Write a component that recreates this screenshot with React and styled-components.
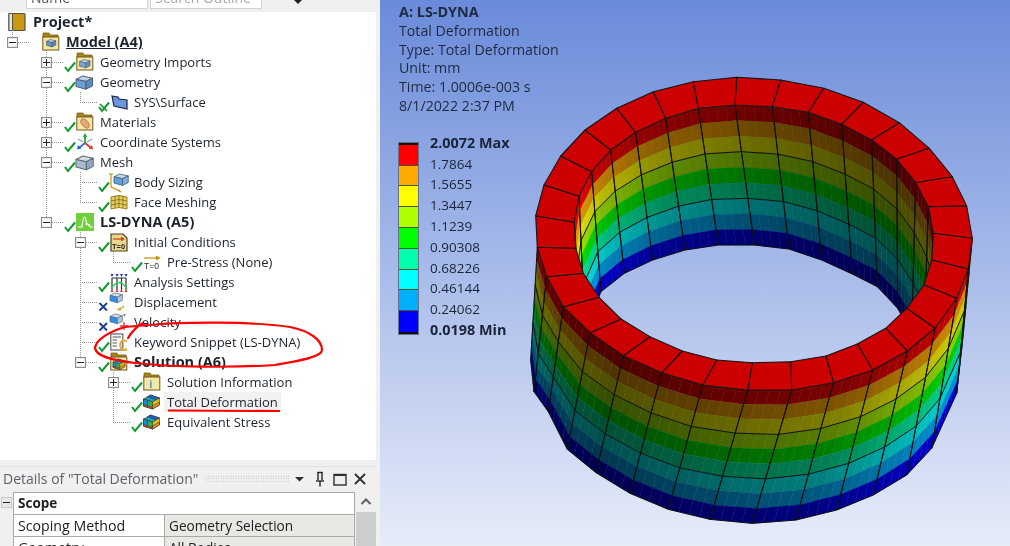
import React from 'react';
import styled, { createGlobalStyle } from 'styled-components';

const Global = createGlobalStyle`
  html, body { margin: 0; padding: 0; background: #f0f0f0; overflow: hidden; }
  #root { width: 1010px; height: 546px; }
`;
const FONT = `"Open Sans", "Noto Sans", "Liberation Sans", sans-serif`;

const Page = styled.div`
  width: 1010px; height: 546px; display: flex; overflow: hidden; background: #f1f1f1;
  font-family: ${FONT}; filter: blur(0.35px);
`;
const LeftPane = styled.div`
  width: 376px; flex: none; display: flex; flex-direction: column; background: #fff;
`;
const TopBar = styled.div`
  height: 12px; flex: none; background: #f0f0f0; display: flex; align-items: flex-end; padding: 0 0 3px 26px; box-sizing: border-box; gap: 2px; overflow: hidden;
`;
const TopField = styled.div`
  width: ${p => p.$w}px; height: 20px; flex: none; background: #fff; border: 1px solid #d4d4d4; box-sizing: border-box;
  font-size: 14px; color: ${p => p.$c}; padding-left: 4px; line-height: 15px; overflow: hidden; white-space: nowrap;
`;
const TopCaret = styled.div`
  margin-left: 29px; margin-bottom: 5px; width: 0; height: 0; flex: none; border-left: 5px solid transparent; border-right: 5px solid transparent; border-top: 5px solid #222;
`;
const Tree = styled.div`
  height: 448px; flex: none; position: relative; display: flex; flex-direction: column; background: #fff;
`;
const TreeLines = styled.svg`
  position: absolute; left: 0; top: 0; pointer-events: none;
`;
const Row = styled.div`
  height: 20px; flex: none; display: flex; align-items: center; padding-left: ${p => p.$left}px; position: relative;
`;
const ExpanderBox = styled.div`
  width: 11px; height: 11px; box-sizing: border-box; border: 1px solid #8e8e8e; background: #fff; flex: none; display: flex; align-items: center; justify-content: center;
  box-shadow: inset 0 0 0 1px #e8e8e8; position: relative;
  &::before { content: ''; width: 7px; height: 1px; background: #222; position: absolute; }
  &::after { content: ''; display: ${p => p.$plus ? 'block' : 'none'}; width: 1px; height: 7px; background: #222; position: absolute; }
`;
const Stub = styled.div`
  width: 11px; flex: none; height: 1px; background: repeating-linear-gradient(90deg, #999 0 1px, transparent 1px 2px) right / 6px 1px no-repeat;
`;
const Connector = styled.div`
  width: 12.5px; flex: none; height: 1px; background: repeating-linear-gradient(90deg, #999 0 1px, transparent 1px 2px);
`;
const MarkSlot = styled.svg`
  width: 12px; height: 20px; flex: none; overflow: visible;
`;
const IconSlot = styled.svg`
  width: 18px; height: 20px; flex: none; overflow: visible;
`;
const Label = styled.span`
  font-size: ${p => p.$bold ? '14.5px' : '13px'}; line-height: 20px; white-space: nowrap; color: #1b2230;
  font-weight: ${p => p.$bold ? 700 : 400};
  text-decoration: ${p => p.$under ? 'underline' : 'none'};
  background: ${p => p.$hl ? '#f1f1f1' : 'transparent'};
  padding: ${p => p.$hl ? '0 3px' : '0'};
  margin-left: ${p => p.$hl ? '3px' : p.$flush ? '0' : '6px'};
`;
const ProjectRow = styled.div`
  height: 20px; flex: none; display: flex; align-items: center; padding-left: 8px; gap: 7px;
`;
const ProjectIcon = styled.svg`
  width: 18px; height: 20px; flex: none;
`;
const Ink = styled.svg`
  position: absolute; left: 0; top: 0; pointer-events: none; z-index: 3;
`;
const DetailsGap = styled.div`
  height: 6px; flex: none; background: #f0f0f0;
`;
const DetailsHead = styled.div`
  height: 24px; flex: none; background: #f0f0f0; display: flex; align-items: center; padding-left: 3px; color: #5c6068; font-size: 14px; border-top: 1px solid #dfe3e8; box-sizing: border-box; white-space: nowrap;
`;
const HeadTitle = styled.span`
  width: 195px; flex: none;
`;
const Grip = styled.div`
  width: 85px; height: 7px; margin-left: 7px; flex: none;
  background-image: radial-gradient(#b5b5b5 0.6px, transparent 0.7px); background-size: 2.5px 2.5px;
`;
const HeadIcons = styled.div`
  display: flex; align-items: center;
`;
const HeadIcon = styled.svg`
  width: 20px; height: 16px; flex: none; color: #303030;
`;
const DetailsBody = styled.div`
  flex: 1; display: flex; background: #f0f0f0; min-height: 0; overflow: hidden; padding-top: 2px;
`;
const Gutter = styled.div`
  width: 13px; flex: none; padding-top: 5px; box-sizing: border-box; display: flex; justify-content: center; align-items: flex-start;
`;
const SmallMinus = styled.div`
  width: 9px; height: 9px; background: #e8e8e8; border: 1px solid #c8c8c8; position: relative;
  &::before { content: ''; position: absolute; left: 1px; right: 1px; top: 4px; height: 1px; background: #222; }
`;
const Grid = styled.div`
  width: 342px; flex: none; display: flex; flex-direction: column; border: 1px solid #a9a9a9; border-bottom: 0; box-sizing: border-box; background: #fff; color: #202020;
`;
const SectionRow = styled.div`
  height: 22px; flex: none; font-weight: 700; font-size: 13.5px; line-height: 21px; padding-left: 4px; border-bottom: 1px solid #a9a9a9; box-sizing: border-box;
`;
const DataRow = styled.div`
  height: 22px; flex: none; display: grid; grid-template-columns: 151px 1fr; border-bottom: 1px solid #a9a9a9; box-sizing: border-box; line-height: 21px; white-space: nowrap;
`;
const DataKey = styled.div`
  padding-left: 4px; border-right: 1px solid #a9a9a9; font-size: 14.2px;
`;
const DataVal = styled.div`
  padding-left: 4px; background: #e9e8e4; font-size: 13.6px;
`;
const ScrollBar = styled.div`
  flex: 1; display: flex; flex-direction: column; align-items: center; margin-left: 1px;
`;
const ScrollUp = styled.svg`
  width: 20px; height: 20px; flex: none; color: #606060;
`;
const ScrollThumb = styled.div`
  width: 100%; flex: 1; background: #cdcdcd;
`;
const Split = styled.div`
  width: 4px; flex: none; background: #f0f0f0;
`;
const Viewport = styled.div`
  flex: 1; position: relative; padding: 3px 0 0 19px; background: linear-gradient(180deg, #6a8bda 0%, #e7ecf9 100%); color: #1e2a40; overflow: hidden;
`;
const Ring = styled.svg`
  position: absolute; left: 0; top: 0; filter: blur(0.2px);
`;
const InfoLine = styled.div`
  font-size: ${p => p.$bold ? '14.4px' : '14.2px'}; line-height: 18.8px; height: 18.8px; white-space: nowrap; font-weight: ${p => p.$bold ? 700 : 400}; position: relative;
`;
const Legend = styled.div`
  display: flex; align-items: flex-start; margin-top: 27px; position: relative;
`;
const Scale = styled.div`
  width: 19px; display: flex; flex-direction: column; flex: none; border-top: 2px solid #111; border-bottom: 2px solid #111; outline: 1px solid #66708a;
`;
const Swatch = styled.div`
  height: 20.8px; background: ${p => p.$c}; box-sizing: border-box; border-bottom: ${p => p.$last ? 0 : '1px solid #4a5030'};
`;
const Values = styled.div`
  margin-left: 12px; margin-top: -10px; display: flex; flex-direction: column;
`;
const Value = styled.div`
  height: 20.8px; line-height: 20.8px; font-size: ${p => p.$bold ? '14.4px' : '13.5px'}; white-space: nowrap; font-weight: ${p => p.$bold ? 700 : 400}; color: #1a2438;
`;

/* ---------- icons ---------- */
const Check = () => <path d="M1 15 L4 19 L11 10.5" fill="none" stroke="#0f9a2c" strokeWidth="2" />;
const Mark = ({ kind }) => (
  <MarkSlot viewBox="0 0 12 20">
    {kind === 'check' && <Check />}
    {kind === 'xcheck' && <g><Check /><path d="M2 12 L9 19" stroke="#0f9a2c" strokeWidth="1.7" /></g>}
    {kind === 'x' && <path d="M1.5 11 L9 18.5 M9 11 L1.5 18.5" stroke="#1c3a94" strokeWidth="1.8" />}
  </MarkSlot>
);
const Cube = ({ x = 3, y = 3, s = 1, top = '#c6d5e6', side = '#8fa6bf', front = '#a8bdd4', stroke = '#5a6b80' }) => (
  <g transform={`translate(${x} ${y}) scale(${s})`} stroke={stroke} strokeWidth="0.9" strokeLinejoin="round">
    <path d="M0 3 L6 0 L15 2 L9 5 Z" fill={top} />
    <path d="M0 3 L9 5 L9 12 L0 9.5 Z" fill={front} />
    <path d="M9 5 L15 2 L15 9 L9 12 Z" fill={side} />
  </g>
);
const Folder = ({ children }) => (
  <g>
    <path d="M1 3 L1 1 L7 1 L8 3 L16 3 L16 6 L1 6 Z" fill="#a9821c" stroke="#7a5f14" strokeWidth="0.8" />
    <rect x="0.8" y="5" width="16" height="13" fill="#f6e7a4" stroke="#6d5a1e" strokeWidth="1" />
    {children}
  </g>
);
const Rainbow = ({ x = 0, y = 0, s = 1 }) => (
  <g transform={`translate(${x} ${y}) scale(${s})`} stroke="#333" strokeWidth="0.6" strokeLinejoin="round">
    <path d="M0 4 L7 0 L16 3 L9 7 Z" fill="#18a8b8" />
    <path d="M7 0 L16 3 L13 4.8 L4 2 Z" fill="#2060d0" />
    <path d="M0 4 L9 7 L9 14 L0 11 Z" fill="#28b848" />
    <path d="M0 4 L4 5.4 L4 12.4 L0 11 Z" fill="#1e88e0" />
    <path d="M0 9.5 L9 12.4 L9 14 L0 11 Z" fill="#e85020" />
    <path d="M9 7 L16 3 L16 10 L9 14 Z" fill="#e0c020" />
    <path d="M9 11 L16 7 L16 10 L9 14 Z" fill="#e89018" />
  </g>
);
const Icon = ({ kind }) => {
  let body = null;
  switch (kind) {
    case 'modelFolder': body = <Folder><Cube x={4.5} y={7.5} s={0.62} top="#b8cfe6" front="#6f97c5" side="#5d86b5" stroke="#33506f" /></Folder>; break;
    case 'geomImport': body = <Folder><Cube x={3.5} y={7.5} s={0.7} top="#b8cfe6" front="#7fa3cc" side="#6b8fb8" stroke="#445f7c" /></Folder>; break;
    case 'geometry': body = <Cube x={0} y={4} s={1.1} top="#bcd0e6" front="#6f9ed6" side="#5d8ac2" stroke="#4a5f78" />; break;
    case 'surface': body = <path d="M2 4 L8 5 L9 7 L17 8 L17 17 L4 14 Z" fill="#6d96e0" stroke="#1b2440" strokeWidth="1.2" />; break;
    case 'materials': body = <Folder><ellipse cx="9" cy="11.5" rx="3.2" ry="5.5" transform="rotate(-40 9 11.5)" fill="#e8a878" stroke="#a87850" strokeWidth="0.8" /></Folder>; break;
    case 'csys': body = (
      <g strokeWidth="1.8" fill="none">
        <path d="M9 11 L9 3" stroke="#22a838" />
        <path d="M9 1 L6.8 5 L11.2 5 Z" fill="#22a838" stroke="none" />
        <path d="M9 11 L3 16" stroke="#3b6fd0" />
        <path d="M1 17.5 L2 13 L5.4 16.4 Z" fill="#2a5fc8" stroke="none" />
        <path d="M9 11 L15 16" stroke="#e03828" />
        <path d="M17 17.5 L16 13 L12.6 16.4 Z" fill="#e03828" stroke="none" />
        <path d="M2 7 L7 10 M16 7 L11 10" stroke="#8fa0b0" strokeWidth="1.2" />
      </g>
    ); break;
    case 'mesh': body = <Cube x={0} y={4} s={1.15} top="#d3dce6" front="#a9bcd0" side="#93a8bf" stroke="#5c6b7c" />; break;
    case 'sizing': body = (
      <g>
        <path d="M1 2 L1 15 L10 19" fill="none" stroke="#d9a830" strokeWidth="1.5" />
        <path d="M-1 2 L3 2 M8 18 L11 20" stroke="#b88a20" strokeWidth="1.2" />
        <Cube x={4} y={2} s={0.95} top="#c5d5e6" front="#5f9ee0" side="#7aaedc" stroke="#4c6178" />
      </g>
    ); break;
    case 'face': body = (
      <g stroke="#8d7416" strokeWidth="0.9" fill="#e6cf62">
        <path d="M1 5 Q9 2 17 5 L17 17 Q9 14 1 17 Z" />
        <path d="M1 9 Q9 6 17 9 M1 13 Q9 10 17 13 M5 3.8 L5 15.8 M9 3.2 L9 15.2 M13 3.8 L13 15.8" fill="none" />
      </g>
    ); break;
    case 'dyna': body = (
      <g>
        <rect x="0" y="1" width="18" height="18" fill="#6fcf3c" />
        <path d="M2 15 L6 15 Q7 5 8.5 5 Q10 5 10.5 13 Q11.5 10 12.5 13 Q13.5 11.5 14 15 L17 15" fill="none" stroke="#fff" strokeWidth="1.2" />
      </g>
    ); break;
    case 'init': body = (
      <g>
        <path d="M1 2 L13 2 L17 6 L17 19 L1 19 Z" fill="#e9d88c" stroke="#4a4020" strokeWidth="1.2" />
        <path d="M3 7 L13 7" stroke="#c94a1c" strokeWidth="1.3" />
        <path d="M11 4.5 L15 7 L11 9.5 Z" fill="#c94a1c" />
        <text x="2" y="17" fontSize="7.5" fontWeight="700" fill="#222" fontFamily="Liberation Sans">T=0</text>
      </g>
    ); break;
    case 't0': body = (
      <g>
        <path d="M1 6 L15 6" stroke="#c89818" strokeWidth="1.3" />
        <path d="M13 3.5 L18 6 L13 8.5 Z" fill="#c89818" />
        <text x="1" y="17" fontSize="8.5" fill="#303030" fontFamily="Liberation Sans">T=0</text>
      </g>
    ); break;
    case 'analysis': body = (
      <g fill="none">
        <path d="M2 6 L16 6 M2 6 L2 18 M7 6 L7 18 M11.5 6 L11.5 18 M16 6 L16 18" stroke="#303030" strokeWidth="1.2" />
        <path d="M1 17 Q9 4 17 17" stroke="#2ecc50" strokeWidth="1.3" />
        <path d="M0.5 2 L3.5 2 L2 5 Z M5.5 2 L8.5 2 L7 5 Z M10 2 L13 2 L11.5 5 Z M14.5 2 L17.5 2 L16 5 Z" fill="#2030d0" />
        <path d="M0.5 20 L3.5 20 L2 17 Z M5.5 20 L8.5 20 L7 17 Z M10 20 L13 20 L11.5 17 Z M14.5 20 L17.5 20 L16 17 Z" fill="#e03838" />
      </g>
    ); break;
    case 'disp': body = (
      <g>
        <Cube x={0} y={1} s={0.82} top="#d8e2ec" front="#2f8fe6" side="#b5c6d8" stroke="#5a6b80" />
        <path d="M9 18 L14 14" stroke="#d8a828" strokeWidth="1.4" />
        <path d="M6.5 18 L10.5 15 L11 18.5 Z" fill="#d8a828" />
      </g>
    ); break;
    case 'vel': body = (
      <g>
        <Cube x={0} y={2} s={0.82} top="#d8e2ec" front="#2f8fe6" side="#b5c6d8" stroke="#5a6b80" />
        <path d="M10 14 L18 14 M14 10 L14 18" stroke="#e03838" strokeWidth="1.3" />
        <path d="M13 2 L16 2 L14.5 5 Z" fill="#888" />
      </g>
    ); break;
    case 'keyword': body = (
      <g>
        <rect x="0.8" y="2" width="12" height="16" fill="#fff" stroke="#555" strokeWidth="1.1" />
        <path d="M2.5 5 L11 5 M2.5 8 L7 8 M2.5 11 L7 11 M2.5 14 L7 14" stroke="#555" strokeWidth="1" />
        <path d="M17 9.5 Q14 7.5 11.5 9.5 Q9 13 11.5 17 Q14 19 17 17" fill="none" stroke="#dcae3a" strokeWidth="2.2" />
      </g>
    ); break;
    case 'solution': body = <Folder><Rainbow x={3} y={7} s={0.75} /></Folder>; break;
    case 'info': body = <Folder><text x="6.5" y="16" fontSize="10" fontWeight="700" fill="#3a8ee0" fontFamily="Liberation Sans">i</text></Folder>; break;
    case 'result': body = <Rainbow x={0.5} y={3} />; break;
    default: break;
  }
  return <IconSlot viewBox="0 0 18 20">{body}</IconSlot>;
};

const TREE = [
  { l: 6.5, e: 'minus', m: '', i: 'modelFolder', t: 'Model (A4)', bold: true, under: true },
  { l: 40.5, e: 'plus', m: 'check', i: 'geomImport', t: 'Geometry Imports' },
  { l: 40.5, e: 'minus', m: 'check', i: 'geometry', t: 'Geometry' },
  { l: 74.5, m: 'xcheck', i: 'surface', t: 'SYS\\Surface' },
  { l: 40.5, e: 'plus', m: 'check', i: 'materials', t: 'Materials' },
  { l: 40.5, e: 'plus', m: 'check', i: 'csys', t: 'Coordinate Systems' },
  { l: 40.5, e: 'minus', m: 'check', i: 'mesh', t: 'Mesh' },
  { l: 74.5, m: 'check', i: 'sizing', t: 'Body Sizing' },
  { l: 74.5, m: 'check', i: 'face', t: 'Face Meshing' },
  { l: 40.5, e: 'minus', m: 'check', i: 'dyna', t: 'LS-DYNA (A5)', bold: true },
  { l: 74.5, e: 'minus', m: 'check', i: 'init', t: 'Initial Conditions' },
  { l: 107.5, m: 'check', i: 't0', t: 'Pre-Stress (None)' },
  { l: 74.5, m: 'check', i: 'analysis', t: 'Analysis Settings' },
  { l: 74.5, m: 'x', i: 'disp', t: 'Displacement' },
  { l: 74.5, m: 'x', i: 'vel', t: 'Velocity' },
  { l: 74.5, m: 'check', i: 'keyword', t: 'Keyword Snippet (LS-DYNA)' },
  { l: 74.5, e: 'minus', m: 'check', i: 'solution', t: 'Solution (A6)', bold: true },
  { l: 107.5, e: 'plus', m: 'check', i: 'info', t: 'Solution Information' },
  { l: 107.5, m: 'check', i: 'result', t: 'Total Deformation', hl: true },
  { l: 107.5, m: 'check', i: 'result', t: 'Equivalent Stress' },
];

/* ---------- ring model, traced from the picture ---------- */
const Z5 = ([x, y]) => [520 + x / 3, 70 + y / 3];
const Z6 = ([x, y]) => [520 + x / 3, 290 + y / 3];
const OUT = [
  [650, 22], [782, 30], [912, 55], [1030, 97], [1138, 158], [1228, 235], [1297, 320], [1340, 408], [1357, 505], [1345, 597], [1310, 685],
].map(Z5).concat([
  [1245, 115], [1162, 183], [1058, 240], [940, 278], [815, 300], [683, 300], [548, 285], [425, 248], [310, 197], [210, 128], [130, 50],
].map(Z6)).concat([
  [80, 620], [52, 532], [47, 437], [72, 345], [122, 258], [195, 180], [290, 115], [400, 65], [520, 35],
].map(Z5));
const INN = [
  [645, 105], [757, 110], [865, 127], [965, 163], [1055, 210], [1130, 268], [1187, 338], [1225, 410], [1240, 490], [1235, 570], [1212, 645],
].map(Z5).concat([
  [1160, 55], [1097, 115], [1012, 162], [918, 198], [812, 215], [697, 218], [590, 210], [487, 183], [390, 140], [303, 87], [237, 22],
].map(Z6)).concat([
  [190, 610], [167, 535], [163, 457], [177, 378], [215, 305], [272, 240], [347, 187], [437, 145], [535, 115],
].map(Z5));
const OUT_BOTTOM = {
  8: Z6([1328, 150]), 9: Z6([1310, 310]), 10: Z6([1235, 475]), 11: Z6([1160, 555]), 12: Z6([1060, 615]), 13: Z6([950, 660]),
  14: Z6([828, 690]), 15: Z6([697, 700]), 16: Z6([570, 688]), 17: Z6([445, 658]), 18: Z6([330, 610]), 19: Z6([228, 548]),
  20: Z6([142, 478]), 21: Z6([85, 365]), 22: Z6([42, 305]), 23: Z6([32, 210]),
};
const INN_BOTTOM = {
  24: Z5([190, 880]), 25: Z5([195, 780]), 26: Z5([243, 665]), 27: Z5([313, 610]), 28: Z5([398, 570]), 29: Z5([495, 540]), 30: Z5([595, 525]),
  0: Z5([703, 525]), 1: Z5([807, 537]), 2: Z5([905, 570]), 3: Z5([997, 612]), 4: Z5([1072, 650]), 5: Z5([1133, 715]),
  6: Z5([1175, 790]), 7: Z5([1210, 860]), 8: Z5([1235, 900]), 9: Z5([1235, 960]),
};
const BANDS = [
  [255, 0, 0], [255, 170, 0], [255, 255, 0], [176, 255, 0], [0, 255, 0], [0, 255, 170], [0, 255, 255], [0, 176, 255], [0, 0, 255],
];
const lerp = (a, b, t) => [a[0] + (b[0] - a[0]) * t, a[1] + (b[1] - a[1]) * t];
const pts = arr => arr.map(p => `${p[0].toFixed(1)},${p[1].toFixed(1)}`).join(' ');
const interp = (table, x) => {
  if (x <= table[0][0]) return table[0][1];
  for (let i = 1; i < table.length; i++) {
    if (x <= table[i][0]) {
      const t = (x - table[i - 1][0]) / (table[i][0] - table[i - 1][0]);
      return table[i - 1][1] + (table[i][1] - table[i - 1][1]) * t;
    }
  }
  return table[table.length - 1][1];
};
const OUT_LIGHT = [[530, 0.45], [560, 0.36], [620, 0.31], [750, 0.41], [850, 0.5], [890, 0.6], [920, 0.68], [960, 0.8]];
const INN_LIGHT = [[575, 0.9], [600, 0.72], [650, 0.55], [750, 0.42], [820, 0.36], [900, 0.3], [935, 0.34]];

const wall = (top, bottom, keys, light, prefix) => {
  const polys = [];
  const lines = [];
  keys.forEach(([a, b]) => {
    const ta = top[a], tb = top[b], ba = bottom[a], bb = bottom[b];
    const sub = 4;
    for (let s = 0; s < sub; s++) {
      const u0 = s / sub, u1 = (s + 1) / sub;
      const t0 = lerp(ta, tb, u0), t1 = lerp(ta, tb, u1), b0 = lerp(ba, bb, u0), b1 = lerp(ba, bb, u1);
      const k = interp(light, (t0[0] + t1[0]) / 2);
      BANDS.forEach((c, i) => {
        const v0 = i / 9, v1 = (i + 1) / 9;
        const col = `rgb(${c.map(n => Math.round(n * k)).join(',')})`;
        polys.push(
          <polygon key={`${prefix}${a}-${s}-${i}`} points={pts([lerp(t0, b0, v0), lerp(t1, b1, v0), lerp(t1, b1, v1), lerp(t0, b0, v1)])} fill={col} stroke={col} strokeWidth="0.4" />
        );
      });
    }
    [1 / 3, 2 / 3, 1].forEach((v, i) => {
      const p = lerp(ta, ba, v), q = lerp(tb, bb, v);
      lines.push(<line key={`${prefix}h${a}-${i}`} x1={p[0]} y1={p[1]} x2={q[0]} y2={q[1]} stroke="#101010" strokeWidth="1" />);
    });
    lines.push(<line key={`${prefix}v${a}`} x1={ta[0]} y1={ta[1]} x2={ba[0]} y2={ba[1]} stroke="#101010" strokeWidth="1" />);
    lines.push(<line key={`${prefix}w${a}`} x1={tb[0]} y1={tb[1]} x2={bb[0]} y2={bb[1]} stroke="#101010" strokeWidth="1" />);
  });
  return [...polys, ...lines];
};
const outKeys = [];
for (let i = 8; i < 23; i++) outKeys.push([i, i + 1]);
const innKeys = [[24, 25], [25, 26], [26, 27], [27, 28], [28, 29], [29, 30], [30, 0], [0, 1], [1, 2], [2, 3], [3, 4], [4, 5], [5, 6], [6, 7], [7, 8], [8, 9]];

const RingModel = () => (
  <Ring width="630" height="546" viewBox="380 0 630 546">
    <defs>
      <clipPath id="inner-hole"><polygon points={pts(INN)} /></clipPath>
    </defs>
    {wall(OUT, OUT_BOTTOM, outKeys, OUT_LIGHT, 'o')}
    <g clipPath="url(#inner-hole)">{wall(INN, INN_BOTTOM, innKeys, INN_LIGHT, 'i')}</g>
    {OUT.map((p, i) => {
      const n = (i + 1) % OUT.length;
      return <polygon key={i} points={pts([p, OUT[n], INN[n], INN[i]])} fill="#cc0000" stroke="#141414" strokeWidth="1.1" strokeLinejoin="round" />;
    })}
  </Ring>
);

const LEGEND = [
  ['#ff0000', '1.7864'], ['#ffaa00', '1.5655'], ['#ffff00', '1.3447'], ['#b0ff00', '1.1239'], ['#00ff00', '0.90308'],
  ['#00ffaa', '0.68226'], ['#00ffff', '0.46144'], ['#00b0ff', '0.24062'], ['#0000ff', ''],
];

export default function App() {
  return (
    <Page>
      <Global />
      <LeftPane>
        <TopBar>
          <TopField $w={122} $c="#555">Name</TopField>
          <TopField $w={112} $c="#aaa">Search Outline</TopField>
          <TopCaret />
        </TopBar>
        <Tree>
          <TreeLines width="376" height="448" viewBox="0 12 376 448">
            <path d="M12.5 30V37 M46.5 50V222 M80.5 92V102 M80.5 172V202 M80.5 232V362 M113.5 252V262 M113.5 372V422" fill="none" stroke="#999" strokeDasharray="1 1" />
          </TreeLines>
          <ProjectRow>
            <ProjectIcon viewBox="0 0 18 20">
              <rect x="1" y="1.5" width="16" height="17" rx="1" fill="#c9980c" stroke="#54504a" strokeWidth="1.2" />
              <rect x="1" y="1.5" width="3.5" height="17" fill="#e9e6dc" stroke="#54504a" strokeWidth="1" />
            </ProjectIcon>
            <Label $bold $flush>Project*</Label>
          </ProjectRow>
          {TREE.map(r => (
            <Row key={r.t} $left={r.l}>
              {r.e ? <ExpanderBox $plus={r.e === 'plus'} /> : <Stub />}
              <Connector />
              <Mark kind={r.m} />
              <Icon kind={r.i} />
              <Label $bold={r.bold} $under={r.under} $hl={r.hl}>{r.t}</Label>
            </Row>
          ))}
          <Ink width="376" height="448" viewBox="0 12 376 448">
            <path d="M128 338 Q134 328 143 323 M150 325 C180 322 250 321 290 327 C310 331 322 340 322 350 C322 358 290 362 275 365 C230 368 170 367 135 363 C110 360 96 356 95 348 C96 340 108 332 125 327 L148 325" fill="none" stroke="#f00" strokeWidth="2.2" strokeLinecap="round" />
            <path d="M168 410.5 L280 411" fill="none" stroke="#f00" strokeWidth="2" />
          </Ink>
        </Tree>
        <DetailsGap />
        <DetailsHead>
          <HeadTitle>Details of "Total Deformation"</HeadTitle>
          <Grip />
          <HeadIcons>
            <HeadIcon viewBox="0 0 20 16"><path d="M5 6 L14 6 L9.5 10.5 Z" fill="currentColor" /></HeadIcon>
            <HeadIcon viewBox="0 0 20 16"><path d="M7 1.5 H13 M8 1.5 V9 M12 1.5 V9 M6 10 H14 M10 10 V15.5" stroke="currentColor" strokeWidth="1.5" fill="none" /></HeadIcon>
            <HeadIcon viewBox="0 0 20 16"><rect x="4" y="3.5" width="12" height="10.5" fill="none" stroke="currentColor" strokeWidth="1.4" /><path d="M4 4 H16" stroke="currentColor" strokeWidth="2" /></HeadIcon>
            <HeadIcon viewBox="0 0 20 16"><path d="M5 3 L15 13 M15 3 L5 13" stroke="currentColor" strokeWidth="1.8" /></HeadIcon>
          </HeadIcons>
        </DetailsHead>
        <DetailsBody>
          <Gutter><SmallMinus /></Gutter>
          <Grid>
            <SectionRow>Scope</SectionRow>
            <DataRow><DataKey>Scoping Method</DataKey><DataVal>Geometry Selection</DataVal></DataRow>
            <DataRow><DataKey>Geometry</DataKey><DataVal>All Bodies</DataVal></DataRow>
          </Grid>
          <ScrollBar>
            <ScrollUp viewBox="0 0 20 20"><path d="M5.5 12 L10 7.5 L14.5 12" fill="none" stroke="currentColor" strokeWidth="2" /></ScrollUp>
            <ScrollThumb />
          </ScrollBar>
        </DetailsBody>
      </LeftPane>
      <Split />
      <Viewport>
        <RingModel />
        <InfoLine $bold>A: LS-DYNA</InfoLine>
        <InfoLine>Total Deformation</InfoLine>
        <InfoLine>Type: Total Deformation</InfoLine>
        <InfoLine>Unit: mm</InfoLine>
        <InfoLine>Time: 1.0006e-003 s</InfoLine>
        <InfoLine>8/1/2022 2:37 PM</InfoLine>
        <Legend>
          <Scale>
            {LEGEND.map((s, i) => <Swatch key={s[0]} $c={s[0]} $last={i === 8} />)}
          </Scale>
          <Values>
            <Value $bold>2.0072 Max</Value>
            {LEGEND.slice(0, 8).map(s => <Value key={s[1]}>{s[1]}</Value>)}
            <Value $bold>0.0198 Min</Value>
          </Values>
        </Legend>
      </Viewport>
    </Page>
  );
}
